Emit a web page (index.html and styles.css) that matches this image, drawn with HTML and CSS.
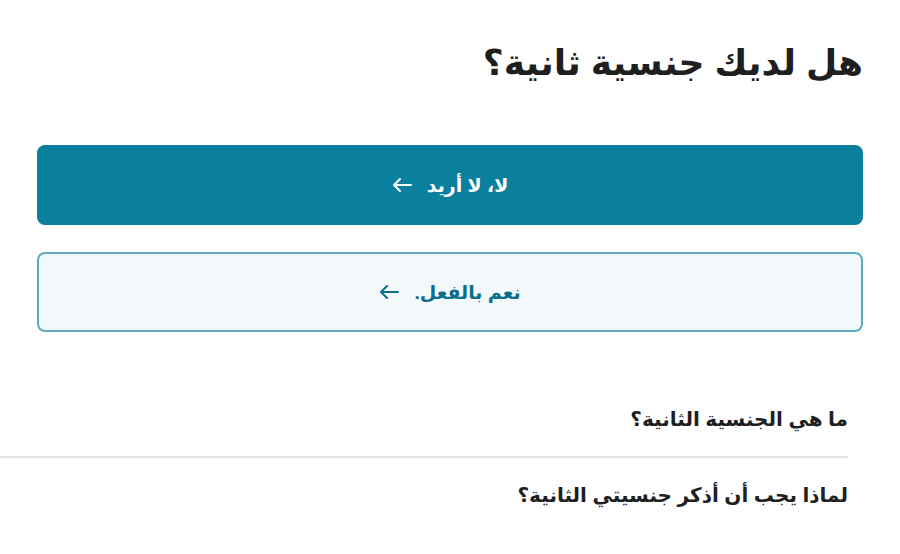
FILE: index.html
```html
<!DOCTYPE html>
<html lang="ar" dir="rtl">
<head>
    <meta charset="utf-8" />
    <meta name="viewport" content="width=device-width, initial-scale=1.0" />
    <title>الجنسية الثانية</title>
    <link rel="stylesheet" href="styles.css">
</head>
<body>
    <div class="container">
        <h1 class="question">هل لديك جنسية ثانية؟</h1>

        <div class="choices">
            <button type="button" class="choice primary">
                <span>لا، لا أريد</span>
                <svg class="arrow" width="20" height="16" viewBox="0 0 20 16" aria-hidden="true">
                    <path d="M19 8H2M8 2L2 8l6 6" fill="none" stroke="currentColor" stroke-width="2" stroke-linecap="round" stroke-linejoin="round"/>
                </svg>
            </button>
            <button type="button" class="choice secondary">
                <span>نعم بالفعل.</span>
                <svg class="arrow" width="20" height="16" viewBox="0 0 20 16" aria-hidden="true">
                    <path d="M19 8H2M8 2L2 8l6 6" fill="none" stroke="currentColor" stroke-width="2" stroke-linecap="round" stroke-linejoin="round"/>
                </svg>
            </button>
        </div>
    </div>

    <ul class="faq">
        <li><a href="#" class="faq-link">ما هي الجنسية الثانية؟</a></li>
        <li><a href="#" class="faq-link">لماذا يجب أن أذكر جنسيتي الثانية؟</a></li>
    </ul>
</body>
</html>
```

FILE: styles.css
```css
body {
    font-family: Arial, "DejaVu Sans", sans-serif;
    background-color: white;
    color: #1f1f1f;
    margin: 0;
    padding: 0;
}

.container {
    padding: 38px 37px 0 37px;
}

.question {
    font-size: 36px;
    font-weight: bold;
    margin: 0 0 57px;
    line-height: 1.4;
}

.choices {
    display: flex;
    flex-direction: column;
    gap: 27px;
}

.choice {
    display: flex;
    justify-content: center;
    align-items: center;
    gap: 15px;
    height: 80px;
    width: 100%;
    border-radius: 8px;
    font-family: inherit;
    font-size: 19px;
    font-weight: bold;
    cursor: pointer;
}

.primary {
    background-color: #0b7f9e;
    color: white;
    border: none;
}

.secondary {
    background-color: #f3f8fb;
    color: #0b6f8b;
    border: 2px solid #5aaac2;
}

.faq {
    list-style: none;
    margin: 50px 52px 0 0;
    padding: 0;
}

.faq li {
    padding: 25px 0;
}

.faq li + li {
    border-top: 2px solid #e3e3e3;
}

.faq-link {
    color: #1f1f1f;
    font-size: 20px;
    font-weight: bold;
    text-decoration: none;
}
```
